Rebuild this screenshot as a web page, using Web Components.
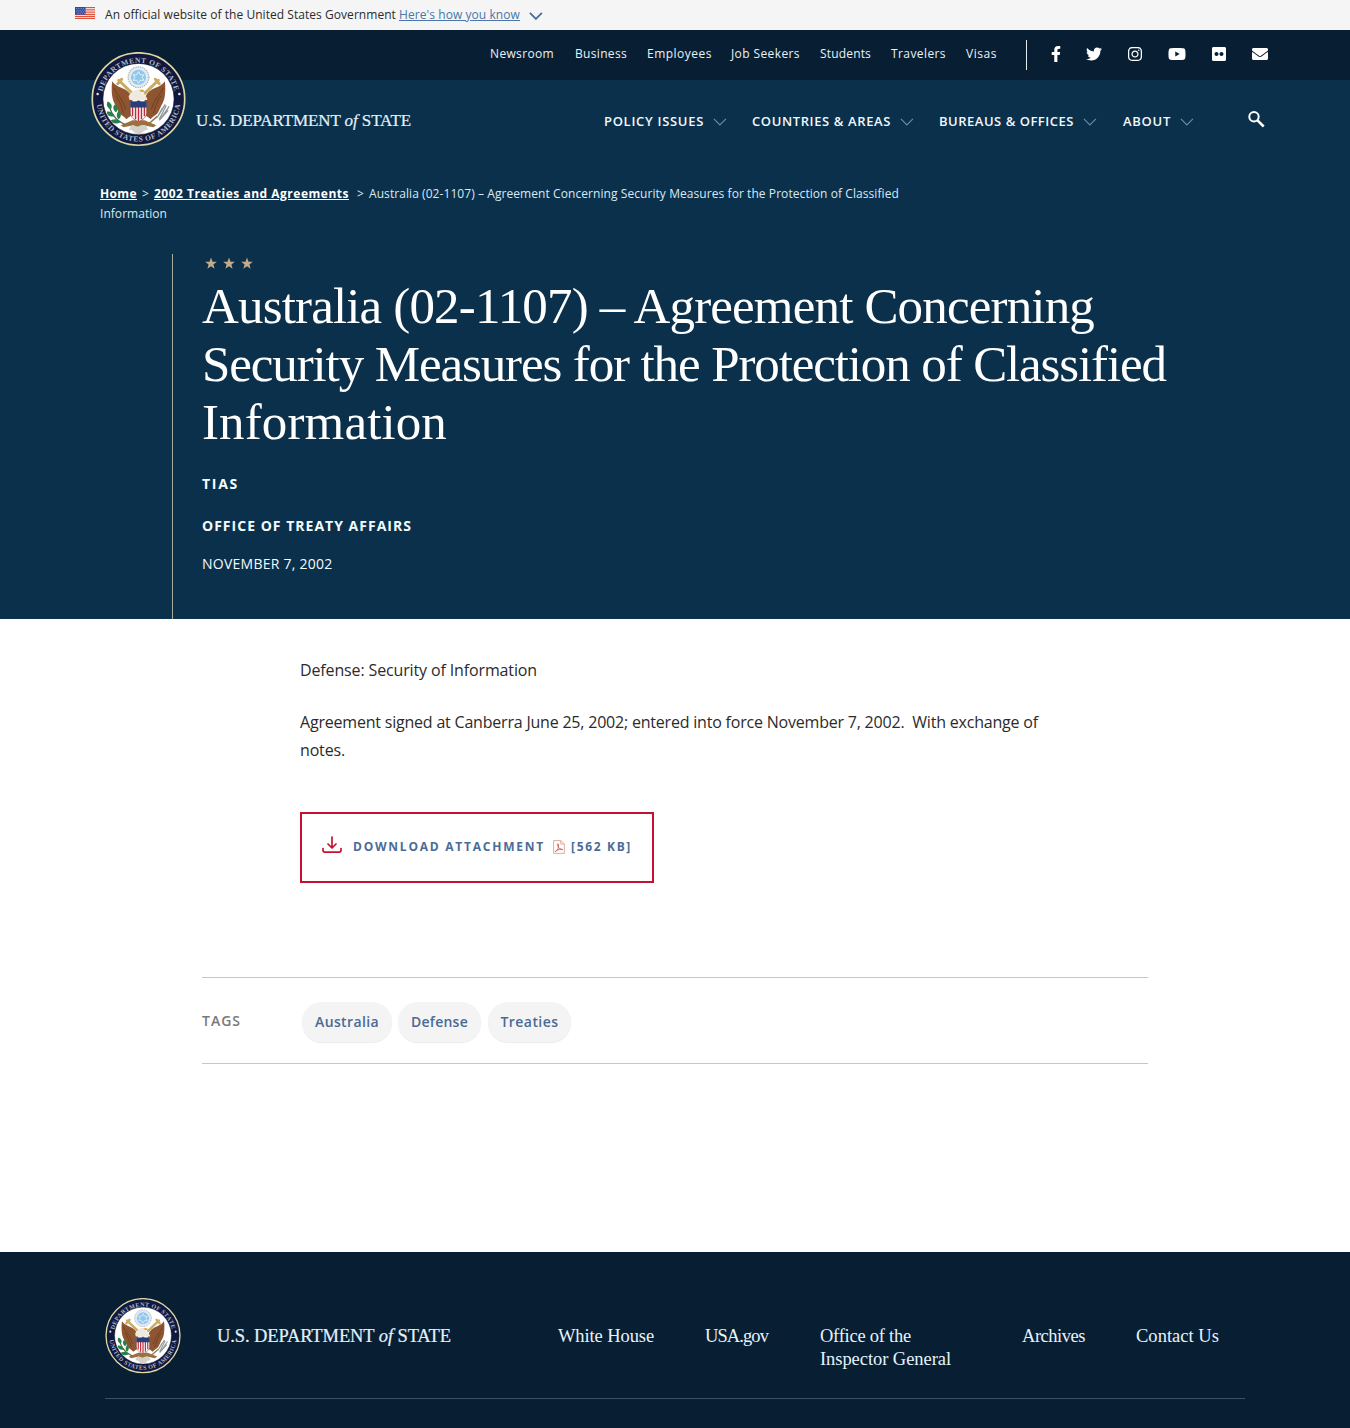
<!DOCTYPE html>
<html lang="en">
<head>
<meta charset="utf-8">
<title>Australia (02-1107) – Agreement Concerning Security Measures for the Protection of Classified Information</title>
<style>
body{margin:0;background:#fff;font-family:"Open Sans",sans-serif;color:#2b2b2b}
</style>
</head>
<body>
<state-page></state-page>
<script>
const define = (name, html, after) => customElements.define(name, class extends HTMLElement {
  connectedCallback() {
    if (this.shadowRoot) return;
    this.attachShadow({mode: 'open'}).innerHTML = html;
    if (after) after(this);
  }
});

// A single line of text tracked out or in to a given measure (attribute w, in px).
define('text-run', `<style>
:host{display:inline-block;white-space:pre;flex:none}
span{text-decoration:inherit;display:inline-block}
</style><span><slot></slot></span>`, el => {
  const w = +el.getAttribute('w'), s = el.shadowRoot.querySelector('span');
  s.style.letterSpacing = '0.001px';
  const nat = s.getBoundingClientRect().width;
  s.style.letterSpacing = ((w - nat) / el.textContent.length).toFixed(4) + 'px';
  el.style.width = w + 'px';
});

define('chevron-down', `<style>:host{display:block;flex:none;color:#6f8da5}svg{display:block}</style>
<svg width="14" height="8" viewBox="0 0 14 8" fill="none" stroke="currentColor"><path style="stroke-width:var(--sw,1.1)" d="M.9.8 6.900 6.900 12.900.8"/></svg>`);

define('us-flag', `<style>:host{display:block;flex:none}svg{display:block}</style>
<svg width="20" height="13" viewBox="0 0 20 13"><rect width="20" height="12" fill="#fff"/>
<path d="M0 .7h20M0 2.9h20M0 5.1h20M0 7.3h20M0 9.3h20M0 11.4h20" stroke="#e0513c" stroke-width="1.2"/>
<rect width="10.5" height="7.6" fill="#2b4ba5"/><path d="M1 1.6h9M1.8 3.2h8M1 4.8h9M1.8 6.3h8" stroke="#c9d4f2" stroke-width=".6" stroke-dasharray=".8 1"/></svg>`);

define('state-seal', `<style>:host{display:block;flex:none}svg{display:block;width:100%;height:100%}</style>
<svg viewBox="0 0 96 96">
<defs><path id="t" d="M10.800 48a37.200 37.200 0 0 1 74.400 0"/><path id="b" d="M5.500 48a42.500 42.500 0 0 0 85 0"/></defs>
<circle cx="48" cy="47.500" r="46.700" fill="#11183f" stroke="#ddd7a3" stroke-width="1.700"/>
<circle cx="48" cy="47.500" r="36" fill="#fff" stroke="#080c25" stroke-width=".6"/>
<g fill="#aebbcb" font-family="Liberation Serif,serif" font-size="7.600" font-weight="700">
<text><textPath href="#t" startOffset="8" textLength="100">DEPARTMENT OF STATE</textPath></text>
<text><textPath href="#b" startOffset="5" textLength="123">UNITED STATES OF AMERICA</textPath></text></g>
<circle cx="6.700" cy="42.500" r="1.300" fill="#e6e6dc"/><circle cx="89.300" cy="42.500" r="1.300" fill="#e6e6dc"/>
<circle cx="48" cy="25.500" r="10.500" fill="#e4eaf0" stroke="#a9b4bf" stroke-width="1.200" stroke-dasharray="1.4 .9"/>
<circle cx="48" cy="25.500" r="7.600" fill="#8fc8ef"/>
<path d="m48 19.900 1.800 3.100h3.600l-1.800 2.500 1.800 3.100h-3.600L48 31.700l-1.800-3.100h-3.600l1.800-3.100-1.800-2.500h3.600z" fill="none" stroke="#e8f6ff" stroke-width=".9"/>
<path d="M21.500 29.500c3 5 9 6 13 8.500 4 2.400 7 6 7.500 12l-1 14-5.500 4c-1-2.500-5.500-4-7-6.500l-1.500-3-2-4.500c-2-3-3-6-3.500-9s-1-10 0-15.500z" fill="#8e5530"/>
<path d="M74.500 29.500c-3 5-9 6-13 8.500-4 2.400-7 6-7.500 12l1 14 5.500 4c1-2.500 5.500-4 7-6.500l1.500-3 2-4.500c2-3 3-6 3.500-9s1-10 0-15.500z" fill="#8e5530"/>
<path d="M23 36c3 8 8 9 12 22M25 44c3 4 5 8 8 18M73 36c-3 8-8 9-12 22M71 44c-3 4-5 8-8 18" stroke="#6b3d20" stroke-width=".9" fill="none"/>
<path d="M28 28.500 41.500 41.500M27 32l4-4.500M68 28.500 54.500 41.500M69 32l-4-4.500" stroke="#c9ab62" stroke-width="3" stroke-linecap="round" fill="none"/>
<path d="M42 69 30 74l3 2 10-2 5 3 5-3 10 2 3-2-12-5z" fill="#9b7140"/>
<path d="M40 75c3-2 5 1 8 0s5-2 8 0l2 4c-4-2-6 4-10 4s-6-6-10-4z" fill="#d6d0cb"/>
<path d="M38 45c2-4 6-7.500 10-7 3 .2 4 2.500 3 4 3 1 5.500 3 6 6.500H39z" fill="#efe9df"/>
<path d="m48.500 38.500 4-.5 1.800 2-3.200.6z" fill="#d9a737"/>
<path d="M39.700 49.500c3 1.200 5.500 1 8.300-.3 2.800 1.300 5.300 1.500 8.300.3v12c0 4.500-4 7-8.300 9-4.300-2-8.300-4.500-8.300-9z" fill="#fff" stroke="#69313c" stroke-width=".6"/>
<path d="M42 55v9.800M45 55v13M48 55v15M51 55v13M54 55v9.800" stroke="#bd2d3b" stroke-width="1.500"/>
<path d="M39.700 49.500c3 1.200 5.500 1 8.300-.3 2.800 1.300 5.300 1.500 8.300.3v6.500H39.700z" fill="#273e79"/>
<path d="M18 51c1 9 5 17 16 22" fill="none" stroke="#5a5e39" stroke-width="1.300"/>
<path d="M17 50c4 2 5 5 3 8-4-2-5-5-3-8m7 3c4 2 4 6 1 8-3-3-3-6-1-8M16 60c5 0 7 2 8 5-5 1-8-1-8-5m12-1c3 3 3 6 0 9-3-3-2-6 0-9M20 69c5-2 8-1 10 2-4 2-8 2-10-2" fill="#25814b"/>
<path d="M59 72l8-7" stroke="#8b7a4c" stroke-width="1.500"/>
<path d="m67 66 5-9m-3 11 7-14m-6 14 9-13M67 66l8-13m-6 16 9-10" stroke="#92979a" stroke-width="1.300"/>
</svg>`);

const fa = {
 facebook:[320,'M279.14 288l14.22-92.66h-88.91v-60.13c0-25.35 12.42-50.06 52.24-50.06h40.42V6.26S260.43 0 225.36 0c-73.22 0-121.08 44.38-121.08 124.72v70.62H22.89V288h81.39v224h100.17V288z'],
 twitter:[512,'M459.37 151.716c.325 4.548.325 9.097.325 13.645 0 138.72-105.583 298.558-298.558 298.558-59.452 0-114.68-17.219-161.137-47.106 8.447.974 16.568 1.299 25.34 1.299 49.055 0 94.213-16.568 130.274-44.832-46.132-.975-84.792-31.188-98.112-72.772 6.498.974 12.995 1.624 19.818 1.624 9.421 0 18.843-1.300 27.614-3.573-48.081-9.747-84.143-51.980-84.143-102.985v-1.299c13.969 7.797 30.214 12.670 47.431 13.319-28.264-18.843-46.781-51.005-46.781-87.391 0-19.492 5.197-37.360 14.294-52.954 51.655 63.675 129.300 105.258 216.365 109.807-1.624-7.797-2.599-15.918-2.599-24.040 0-57.828 46.782-104.934 104.934-104.934 30.213 0 57.502 12.670 76.670 33.137 23.715-4.548 46.456-13.320 66.599-25.340-7.798 24.366-24.366 44.833-46.132 57.827 21.117-2.273 41.584-8.122 60.426-16.243-14.292 20.791-32.161 39.308-52.628 54.253z'],
 instagram:[448,'M224.1 141c-63.600 0-114.900 51.300-114.900 114.900s51.300 114.900 114.900 114.900S339 319.500 339 255.900 287.700 141 224.100 141zm0 189.600c-41.100 0-74.700-33.500-74.700-74.700s33.500-74.700 74.700-74.700 74.700 33.500 74.700 74.700-33.600 74.700-74.700 74.700zm146.400-194.300c0 14.900-12 26.800-26.800 26.800-14.900 0-26.800-12-26.800-26.800s12-26.800 26.800-26.800 26.800 12 26.800 26.800zm76.100 27.200c-1.700-35.900-9.900-67.700-36.200-93.900-26.200-26.200-58-34.400-93.900-36.200-37-2.100-147.900-2.100-184.900 0-35.800 1.700-67.600 9.900-93.900 36.100s-34.400 58-36.200 93.900c-2.100 37-2.100 147.900 0 184.900 1.700 35.900 9.900 67.700 36.200 93.900s58 34.400 93.900 36.200c37 2.100 147.900 2.100 184.900 0 35.900-1.700 67.700-9.900 93.900-36.200 26.200-26.200 34.400-58 36.200-93.900 2.100-37 2.100-147.800 0-184.800zM398.800 388c-7.800 19.600-22.900 34.700-42.600 42.600-29.500 11.700-99.500 9-132.100 9s-102.700 2.600-132.100-9c-19.600-7.800-34.700-22.900-42.600-42.600-11.700-29.500-9-99.500-9-132.100s-2.600-102.700 9-132.100c7.800-19.600 22.900-34.700 42.600-42.600 29.500-11.700 99.500-9 132.100-9s102.700-2.600 132.100 9c19.600 7.800 34.700 22.900 42.600 42.600 11.700 29.500 9 99.500 9 132.100s2.700 102.700-9 132.100z'],
 youtube:[576,'M549.655 124.083c-6.281-23.650-24.787-42.276-48.284-48.597C458.781 64 288 64 288 64S117.220 64 74.629 75.486c-23.497 6.322-42.003 24.947-48.284 48.597-11.412 42.867-11.412 132.305-11.412 132.305s0 89.438 11.412 132.305c6.281 23.650 24.787 41.500 48.284 47.821C117.220 448 288 448 288 448s170.780 0 213.371-11.486c23.497-6.321 42.003-24.171 48.284-47.821 11.412-42.867 11.412-132.305 11.412-132.305s0-89.438-11.412-132.305zm-317.510 213.508V175.185l142.739 81.205-142.739 81.201z'],
 flickr:[448,'M400 32H48C21.500 32 0 53.500 0 80v352c0 26.500 21.500 48 48 48h352c26.500 0 48-21.500 48-48V80c0-26.500-21.500-48-48-48zM144.500 319c-35.100 0-63.500-28.400-63.500-63.500s28.400-63.500 63.500-63.500 63.500 28.400 63.500 63.500-28.400 63.500-63.500 63.500zm159 0c-35.100 0-63.500-28.400-63.500-63.500s28.400-63.500 63.500-63.500 63.500 28.400 63.500 63.500-28.400 63.500-63.500 63.500z'],
 envelope:[512,'M502.300 190.800c3.900-3.100 9.700-.2 9.700 4.700V400c0 26.500-21.500 48-48 48H48c-26.500 0-48-21.500-48-48V195.600c0-5 5.700-7.800 9.700-4.700 22.400 17.400 52.100 39.500 154.100 113.600 21.100 15.400 56.700 47.800 92.200 47.600 35.700.3 72-32.800 92.300-47.600 102-74.100 131.600-96.300 154-113.700zM256 320c23.200.4 56.600-29.200 73.400-41.400 132.700-96.300 142.800-104.700 173.400-128.700 5.800-4.500 9.200-11.500 9.200-18.900v-19c0-26.500-21.500-48-48-48H48c-26.500 0-48 21.500-48 48v19c0 7.400 3.400 14.300 9.200 18.900 30.600 23.900 40.700 32.400 173.400 128.700 16.800 12.200 50.200 41.800 73.400 41.400z']
};
define('social-icon', '<style>:host{display:block;flex:none}svg{display:block}</style><div></div>', el => {
  const [w, d] = fa[el.getAttribute('name')];
  el.shadowRoot.querySelector('div').innerHTML = `<svg width="${w/32}" height="16" viewBox="0 0 ${w} 512" fill="#fff"><path d="${d}"/></svg>`;
});

define('gov-banner', `<style>
:host{display:flex;height:30px;background:#f5f5f5;padding-left:75px;box-sizing:border-box;font-size:12px;line-height:29px;color:#2b2b2b}
us-flag{margin:7px 10px 0 0}
a{color:#4a76a8;margin-left:3px}a text-run{text-decoration:underline}
chevron-down{color:#4a6f96;margin:12px 0 0 9px;--sw:1.8}
</style><us-flag></us-flag><text-run w="291">An official website of the United States Government</text-run><a><text-run w="121">Here's how you know</text-run></a><chevron-down></chevron-down>`);

define('utility-bar', `<style>
:host{display:flex;height:50px;background:#081f33;box-sizing:border-box;padding:0 82px 0 490px;font-size:12px;line-height:48px;color:#e9f2f8}
nav{display:flex}nav text-run+text-run{margin-left:20px}
hr{margin:10px 0 0 29px;border:0;width:1px;height:30px;background:#e6edf2}
.s{display:flex;gap:26px;margin:16px 0 0 23px}
social-icon:first-child{margin:0 -.5px 0 .5px}
</style><nav><text-run w="64">Newsroom</text-run><text-run w="52" style="margin-left:21px">Business</text-run><text-run w="65">Employees</text-run><text-run w="69" style="margin-left:19px">Job Seekers</text-run><text-run w="51">Students</text-run><text-run w="55">Travelers</text-run><text-run w="31">Visas</text-run></nav><hr>
<div class="s"><social-icon name="facebook"></social-icon><social-icon name="twitter"></social-icon><social-icon name="instagram"></social-icon><social-icon name="youtube"></social-icon><social-icon name="flickr"></social-icon><social-icon name="envelope"></social-icon></div>`);

define('word-mark', `<style>:host{display:block;flex:none;font-family:"Liberation Serif",serif;color:#e3f1fa;-webkit-text-stroke:.2px #e3f1fa;line-height:24px;white-space:nowrap}
</style><slot></slot>`);

define('nav-item', `<style>:host{display:flex;align-items:flex-start;font-size:13px;font-weight:600;line-height:18px;color:#f2f8fc}
chevron-down{margin:6px 0 0 9px}</style><slot></slot><chevron-down></chevron-down>`);

define('main-nav', `<style>
:host{display:flex;height:86px;box-sizing:border-box;padding-left:91px}
state-seal{width:95px;height:95px;margin-top:-28px;position:relative}
word-mark{margin:28.500px 0 0 10px;font-size:17px}
nav{display:flex;margin:32px 0 0 193px}
.g{margin:31px 0 0 54px;display:block}
</style><state-seal></state-seal><word-mark><text-run w="215">U.S. DEPARTMENT <i>of</i> STATE</text-run></word-mark>
<nav><nav-item><text-run w="100">POLICY ISSUES</text-run></nav-item><nav-item style="margin-left:25px"><text-run w="139">COUNTRIES &amp; AREAS</text-run></nav-item><nav-item style="margin-left:25px"><text-run w="135">BUREAUS &amp; OFFICES</text-run></nav-item><nav-item style="margin-left:26px"><text-run w="48">ABOUT</text-run></nav-item></nav>
<svg class="g" width="18" height="18" viewBox="0 0 18 18" fill="none" stroke="#fff"><circle cx="6" cy="5.800" r="4.700" stroke-width="2"/><path d="m9.500 9.300 6.200 6.200" stroke-width="2.500"/></svg>`);

define('bread-crumb', `<style>
:host{display:block;margin-left:100px;padding-top:18px;font-size:12px;line-height:20px;height:40px;color:#d9e9f3}
.r{display:flex}b{color:#fff}b text-run{text-decoration:underline}
</style><div class="r"><b><text-run w="37">Home</text-run></b><span style="margin:0 5px;width:7px">&gt;</span><b><text-run w="195">2002 Treaties and Agreements</text-run></b><span style="margin:0 5px 0 8px;width:7px">&gt;</span><text-run w="530">Australia (02-1107) – Agreement Concerning Security Measures for the Protection of Classified</text-run></div><text-run w="67">Information</text-run>`);

define('page-hero', `<style>
:host{display:block;margin:30px 0 0 172px;border-left:1px solid #a9aaa0;height:365px;box-sizing:border-box;padding-left:29px;color:#fff}
svg{display:block;padding:3px 0 0 3px}
h1{margin:6.700px 0 0;font:400 51px/58.200px "Liberation Serif",serif}
h1 text-run{display:block}
p{margin:0;font-size:14px;line-height:20px;font-weight:700;color:#f4fbff}
</style><svg width="50" height="13" viewBox="0 0 50 13" fill="#c3ab8c"><path id="a" d="m6 .6 1.500 4.100 4.300.1-3.400 2.700 1.200 4.200L6 9.200l-3.600 2.500 1.200-4.200L.2 4.800l4.300-.1z"/><use href="#a" x="18"/><use href="#a" x="36"/></svg>
<h1><text-run w="892">Australia (02-1107) – Agreement Concerning</text-run><text-run w="964">Security Measures for the Protection of Classified</text-run><text-run w="245">Information</text-run></h1>
<p style="margin-top:22.600px"><text-run w="37">TIAS</text-run></p><p style="margin-top:22px"><text-run w="210">OFFICE OF TREATY AFFAIRS</text-run></p><p style="margin-top:18px;font-weight:400"><text-run w="130.500">NOVEMBER 7, 2002</text-run></p>`);

define('article-body', `<style>
:host{display:block;padding:37px 0 0 300px;font-size:16px;line-height:28px;color:#2b2b2b}
p{margin:0 0 24px}p text-run{display:block}
.d{display:flex;box-sizing:border-box;width:354px;height:71px;border:2px solid #c3122f;margin-top:48px;padding-left:20px;font-size:12px;font-weight:700;color:#4a6c97;line-height:66px}
.d svg{flex:none}
</style><p><text-run w="237">Defense: Security of Information</text-run></p>
<p><text-run w="738">Agreement signed at Canberra June 25, 2002; entered into force November 7, 2002.&nbsp; With exchange of</text-run><text-run w="45">notes.</text-run></p>
<div class="d"><svg style="margin:22px 11px 0 0" width="20" height="18" viewBox="0 0 20 18" fill="none" stroke="#c3122f" stroke-width="1.700" stroke-linecap="round" stroke-linejoin="round"><path d="M10 1v10.500M6 8l4 4 4-4M1 12.500v1.800c0 1.300.7 1.900 2 1.900h14c1.300 0 2-.6 2-1.900v-1.800"/></svg><text-run w="192">DOWNLOAD ATTACHMENT</text-run>
<svg style="margin:26px 6px 0 8px" width="12" height="14" viewBox="0 0 12 14" fill="none" stroke="#dfa294" stroke-width=".9"><path d="M.6.6h7.300l3.500 3.400v9.400H.6zM7.800.6v3.500h3.600"/><path d="M2.200 11.600c2.400-.8 4-4.400 3.200-7.500-.7-1-1.300.4-.7 1.600 1 2.700 3 4.100 5.100 3.900-.8-1.200-5.400-.2-7.600 2" stroke="#c9604f"/></svg><text-run w="61">[562 KB]</text-run></div>`);

define('tag-pill', `<style>:host{display:block;box-sizing:border-box;height:40px;border-radius:20px;background:#f4f4f4;padding:0 12.500px 0 13px;line-height:39px;font-size:14px;font-weight:600;color:#4a6a94;box-shadow:0 1px 1px #ececec}</style><slot></slot>`);

define('tag-list', `<style>
:host{display:flex;margin:94px 0 0 202px;width:946px;height:87px;box-sizing:border-box;border:1px solid #c6c6c6;border-width:1px 0;font-size:14px;font-weight:600;color:#797979}
.l{line-height:86px;width:100px}tag-pill{margin:24px 6.500px 0 0}
</style><div class="l"><text-run w="39">TAGS</text-run></div><tag-pill><text-run w="64">Australia</text-run></tag-pill><tag-pill style="margin-right:7px"><text-run w="57">Defense</text-run></tag-pill><tag-pill><text-run w="58">Treaties</text-run></tag-pill>`);

define('site-footer', `<style>
:host{display:block;background:#081f33;margin-top:188px;height:176px;box-sizing:border-box;padding:46px 105px 0;color:#e6f3fb}
.r{display:flex;height:100px;border-bottom:1px solid #3b5063;font:18.500px/23px "Liberation Serif",serif}
state-seal{width:76px;height:76px}
word-mark{font-size:18.500px;margin:26px 107px 0 36px}
a{margin-top:27px}a text-run{display:block}
</style><div class="r"><state-seal></state-seal><word-mark><text-run w="234">U.S. DEPARTMENT <i>of</i> STATE</text-run></word-mark>
<a><text-run w="96">White House</text-run></a><a style="margin-left:51px"><text-run w="63">USA.gov</text-run></a><a style="margin-left:52px"><text-run w="91">Office of the</text-run><text-run w="131">Inspector General</text-run></a><a style="margin-left:71px"><text-run w="63">Archives</text-run></a><a style="margin-left:51px"><text-run w="83">Contact Us</text-run></a></div>`);

define('state-page', `<style>
:host{display:block;width:1350px;height:1428px;overflow:hidden}
.h{background:#0b304b;height:539px}main{display:block}
</style><gov-banner></gov-banner><utility-bar></utility-bar>
<div class="h"><main-nav></main-nav><bread-crumb></bread-crumb><page-hero></page-hero></div>
<main><article-body></article-body><tag-list></tag-list></main><site-footer></site-footer>`);
</script>
</body>
</html>
